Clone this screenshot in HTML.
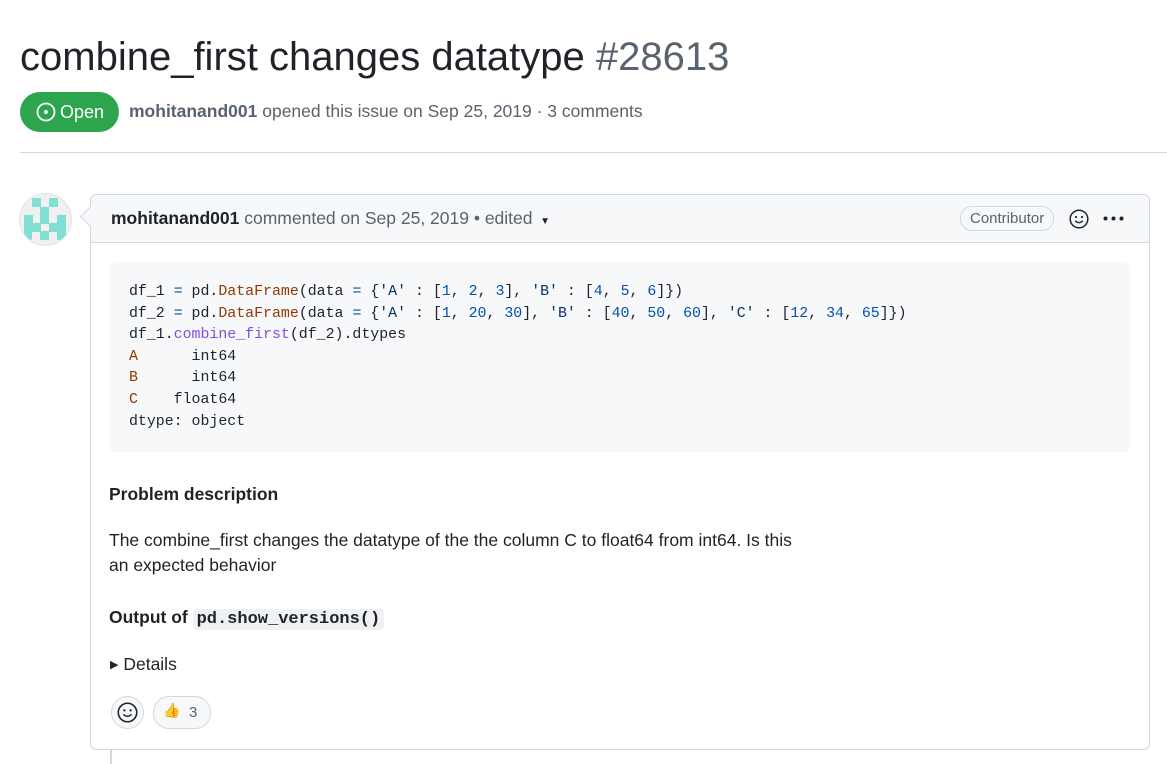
<!DOCTYPE html>
<html><head><meta charset="utf-8"><style>
body{margin:0;background:#fff;font-family:"Liberation Sans",sans-serif;color:#1f2328;width:1167px;height:764px;overflow:hidden;position:relative}
h1{position:absolute;left:20px;top:30px;margin:0;font-size:40px;font-weight:400;line-height:54px;color:#1f2328;white-space:nowrap}
h1 span{color:#59636e}
.badge{position:absolute;left:20px;top:92px;width:99px;height:40px;border-radius:20px;background:#2da44e;color:#fff;font-size:18px;line-height:40px}
.badge svg{position:absolute;left:16px;top:10px}
.badge b{font-weight:400;position:absolute;left:40px}
.meta{position:absolute;left:129px;top:101px;font-size:17.5px;color:#59636e;white-space:nowrap}
.meta b{color:#59636e}
.hr{position:absolute;left:20px;right:0;top:152px;border-top:1px solid #d1d9e0}
.av{position:absolute;left:19px;top:193px;width:51px;height:51px;border-radius:50%;background:#f0f0f0;border:1px solid #e0e3e6;overflow:hidden}
.av i{position:absolute;background:#81dfd4;width:8.5px;height:8.5px}
.box{position:absolute;left:90px;top:194px;width:1058px;height:554px;border:1px solid #d1d9e0;border-radius:6px}
.head{height:47px;background:#f6f8fa;border-bottom:1px solid #d1d9e0;border-radius:6px 6px 0 0;position:relative}
.head .t{position:absolute;left:20px;top:13px;font-size:17.5px;color:#59636e;white-space:nowrap}
.head .t b{color:#1f2328}
.arrow{position:absolute;left:-8px;top:14px;width:14px;height:14px;background:#f6f8fa;border-left:1px solid #d1d9e0;border-bottom:1px solid #d1d9e0;transform:rotate(45deg)}
.contrib{position:absolute;left:869px;top:11px;height:23px;padding:0 9px;border:1px solid #d1d9e0;border-radius:12px;font-size:15px;line-height:23px;color:#59636e}
pre{position:absolute;left:18px;top:67px;width:981px;height:170px;margin:0;padding:20px 20px 0;background:#f6f8fa;border-radius:6px;font-family:"Liberation Mono",monospace;font-size:14.9px;line-height:21.6px;color:#1f2328}
.o{color:#953800}.n{color:#0550ae}.s{color:#0a3069}.p{color:#8250df}
.txt{position:absolute;left:18px;font-size:17.5px;color:#1f2328}
code{font-family:"Liberation Mono",monospace;background:#eff1f3;padding:1px 4px;border-radius:4px;font-size:17px}
.rb{position:absolute;top:501px;height:31px;border:1px solid #d1d9e0;border-radius:16px;background:#f6f8fa}
.line{position:absolute;left:110px;top:750px;width:2px;height:14px;background:#d1d9e0}
</style></head><body>
<h1>combine_first changes datatype <span>#28613</span></h1>
<div class="badge"><svg width="20" height="20" viewBox="0 0 20 20"><circle cx="10" cy="10" r="8.5" fill="none" stroke="#fff" stroke-width="1.8"/><circle cx="10" cy="10" r="2" fill="#fff"/></svg><b>Open</b></div>
<div class="meta"><b>mohitanand001</b> opened this issue on Sep 25, 2019 · 3 comments</div>
<div class="hr"></div>
<div class="av">
<i style="left:12px;top:4px"></i><i style="left:29px;top:4px"></i>
<i style="left:20px;top:13px"></i>
<i style="left:4px;top:21px"></i><i style="left:20px;top:21px"></i><i style="left:37px;top:21px"></i>
<i style="left:4px;top:29px"></i><i style="left:12px;top:29px"></i><i style="left:29px;top:29px"></i><i style="left:37px;top:29px"></i>
<i style="left:4px;top:37px;width:8px"></i><i style="left:20px;top:37px"></i><i style="left:37px;top:37px"></i>
</div>
<div class="box">
<div class="head"><div class="arrow"></div>
<div class="t"><b>mohitanand001</b> commented on Sep 25, 2019 • edited <span style="font-size:10px;color:#1f2328">&nbsp;▼</span></div>
<div class="contrib">Contributor</div>
<svg style="position:absolute;left:978px;top:14px" width="20" height="20" viewBox="0 0 20 20"><circle cx="10" cy="10" r="8.8" fill="none" stroke="#1f2328" stroke-width="1.5"/><circle cx="7" cy="8" r="1.1" fill="#1f2328"/><circle cx="13" cy="8" r="1.1" fill="#1f2328"/><path d="M6.5 12.2q3.5 3 7 0" fill="none" stroke="#1f2328" stroke-width="1.4" stroke-linecap="round"/></svg>
<svg style="position:absolute;left:1012px;top:21px" width="22" height="5"><circle cx="2.5" cy="2.5" r="2" fill="#1f2328"/><circle cx="10.5" cy="2.5" r="2" fill="#1f2328"/><circle cx="18.5" cy="2.5" r="2" fill="#1f2328"/></svg>
</div>
<pre>df_1 <span class="n">=</span> pd.<span class="o">DataFrame</span>(data <span class="n">=</span> {<span class="s">'A'</span> : [<span class="n">1</span>, <span class="n">2</span>, <span class="n">3</span>], <span class="s">'B'</span> : [<span class="n">4</span>, <span class="n">5</span>, <span class="n">6</span>]})
df_2 <span class="n">=</span> pd.<span class="o">DataFrame</span>(data <span class="n">=</span> {<span class="s">'A'</span> : [<span class="n">1</span>, <span class="n">20</span>, <span class="n">30</span>], <span class="s">'B'</span> : [<span class="n">40</span>, <span class="n">50</span>, <span class="n">60</span>], <span class="s">'C'</span> : [<span class="n">12</span>, <span class="n">34</span>, <span class="n">65</span>]})
df_1.<span class="p">combine_first</span>(df_2).dtypes
<span class="o">A</span>      int64
<span class="o">B</span>      int64
<span class="o">C</span>    float64
dtype: object</pre>
<div class="txt" style="top:289px;font-weight:700">Problem description</div>
<div class="txt" style="top:333px;line-height:25px">The combine_first changes the datatype of the the column C to float64 from int64. Is this<br>an expected behavior</div>
<div class="txt" style="top:412px;font-weight:700">Output of <code>pd.show_versions()</code></div>
<div class="txt" style="top:459px;left:19px"><span style="font-size:11px;position:relative;top:-2px">▶</span> Details</div>
<div class="rb" style="left:20px;width:31px;border-radius:50%;background:#f6f8fa"><svg style="position:absolute;left:5px;top:5px" width="21" height="21" viewBox="0 0 20 20"><circle cx="10" cy="10" r="8.8" fill="none" stroke="#1f2328" stroke-width="1.5"/><circle cx="7" cy="8" r="1.1" fill="#1f2328"/><circle cx="13" cy="8" r="1.1" fill="#1f2328"/><path d="M6.5 12.2q3.5 3 7 0" fill="none" stroke="#1f2328" stroke-width="1.4" stroke-linecap="round"/></svg></div>
<div class="rb" style="left:62px;width:56px"><span style="position:absolute;left:9px;top:5px;font-size:14px;color:#e8a600">👍</span><span style="position:absolute;left:35px;top:7px;font-size:15px;color:#59636e">3</span></div>
</div>
<div class="line"></div>
</body></html>
